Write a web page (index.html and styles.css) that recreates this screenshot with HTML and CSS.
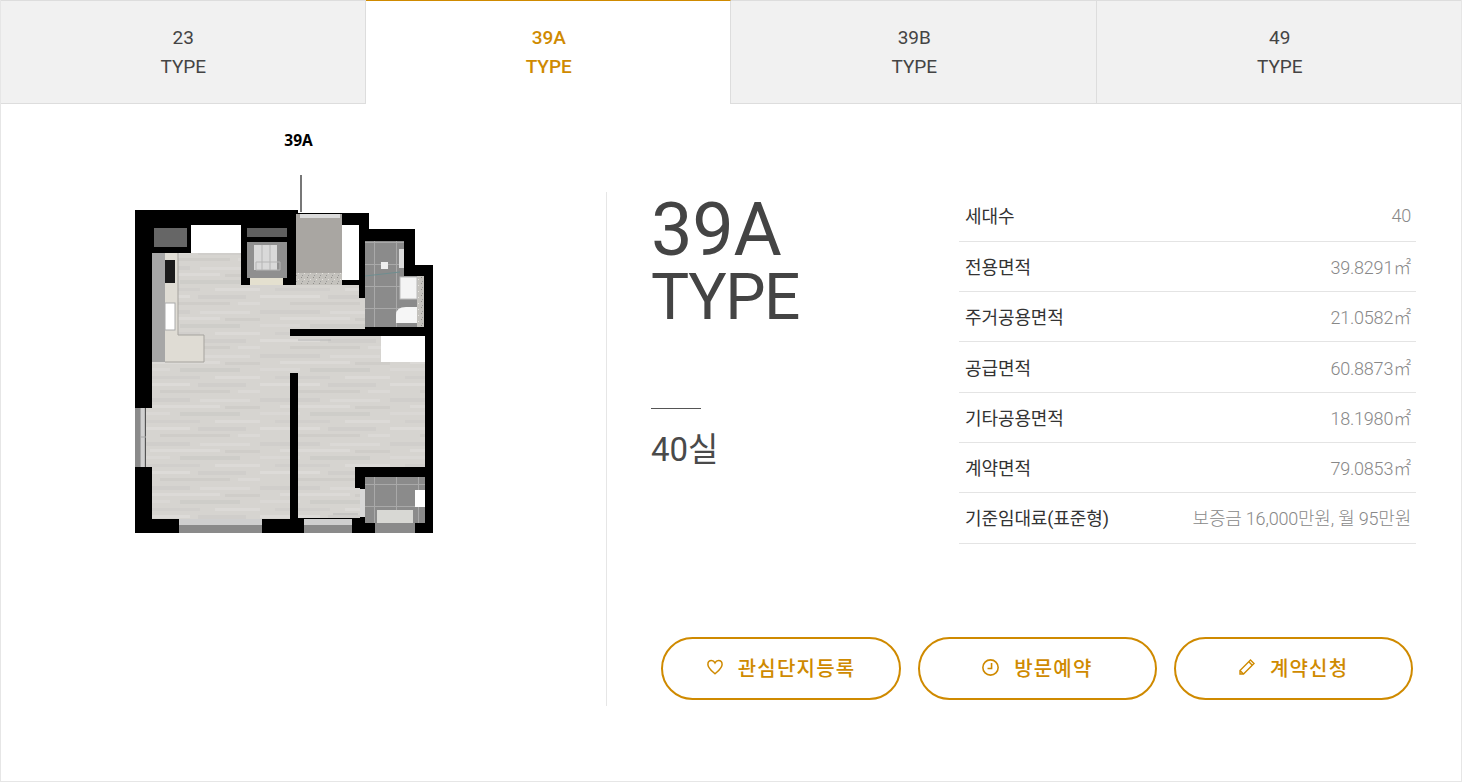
FILE: index.html
```html
<!DOCTYPE html>
<html lang="ko">
<head>
<meta charset="utf-8">
<title>39A TYPE</title>
<link rel="stylesheet" href="styles.css">
</head>
<body>
<div class="page">
  <nav class="tabs">
    <a class="tab">23<br>TYPE</a>
    <a class="tab active"><b>39A</b><br><b>TYPE</b></a>
    <a class="tab">39B<br>TYPE</a>
    <a class="tab">49<br>TYPE</a>
  </nav>
  <main class="body">
    <section class="plan">
      <h3 class="plan-label">39A</h3>
      <svg class="plan-svg" width="330" height="370" viewBox="120 170 330 370">
        <defs>
          <filter id="soft" x="0" y="0" width="100%" height="100%"><feGaussianBlur stdDeviation="0.5"/></filter>
          <pattern id="wood" width="130" height="44" patternUnits="userSpaceOnUse">
            <rect width="130" height="44" fill="#d6d4d0"/>
            <rect x="0" y="2" width="60" height="4" fill="#d0cecb"/>
            <rect x="70" y="3" width="50" height="3" fill="#dbd9d6"/>
            <rect x="20" y="9" width="70" height="3" fill="#dcdad7"/>
            <rect x="95" y="10" width="35" height="3" fill="#cfcdc9"/>
            <rect x="0" y="16" width="40" height="3" fill="#dad8d5"/>
            <rect x="50" y="16" width="60" height="4" fill="#cecdc9"/>
            <rect x="15" y="24" width="55" height="3" fill="#d1cfcc"/>
            <rect x="85" y="24" width="45" height="3" fill="#dcdad7"/>
            <rect x="0" y="31" width="60" height="3" fill="#dddbd8"/>
            <rect x="68" y="31" width="48" height="4" fill="#d0cecb"/>
            <rect x="30" y="38" width="70" height="3" fill="#cfcdc9"/>
            <rect x="108" y="38" width="22" height="3" fill="#dbd9d6"/>
          </pattern>
          <pattern id="tile" width="22" height="22" patternUnits="userSpaceOnUse">
            <rect width="22" height="22" fill="#8b8b8b"/>
            <path d="M0 .5H22M.5 0V22" stroke="#a9a9a9" fill="none"/>
          </pattern>
          <pattern id="speck" width="6" height="6" patternUnits="userSpaceOnUse">
            <rect width="6" height="6" fill="#c4c2bd"/>
            <rect x="1" y="1" width="1" height="1" fill="#8f8d89"/>
            <rect x="4" y="3" width="1" height="1" fill="#e6e4e0"/>
            <rect x="2" y="5" width="1" height="1" fill="#999"/>
          </pattern>
        </defs>

        <rect x="300" y="175" width="2" height="37" fill="#777"/>
        <path d="M135 210H298V213H369V229H415V265H433V533H135Z" fill="#000"/>

        <g filter="url(#soft)">
          <path d="M178 253H241V285H359V298H365V329H290V519H152V362H178Z" fill="url(#wood)"/>
          <path d="M298 336H425V467H355V488H360V518H298Z" fill="url(#wood)"/>
          <rect x="289" y="336" width="10" height="37" fill="url(#wood)"/>
          <rect x="146" y="408" width="7" height="59" fill="url(#wood)"/>
        </g>
        <rect x="135" y="408" width="5" height="59" fill="#8a8a8a"/>
        <rect x="140" y="408" width="5" height="59" fill="#d0d0d0"/>
        <path d="M140.500 408V467M145 408V467M140 437H146" stroke="#a8a8a8" fill="none"/>

        <rect x="152" y="253" width="13" height="109" fill="#a6a6a6"/>
        <rect x="165" y="253" width="13" height="109" fill="#dfdcd4"/>
        <rect x="165" y="335" width="39" height="27" fill="#dfdcd4"/>
        <path d="M178 253V335H204V362H165" fill="none" stroke="#a5a39e"/>
        <rect x="165" y="260" width="10" height="23" fill="#1b1b1b"/>
        <rect x="165" y="303" width="10" height="27" fill="#fff" stroke="#aaa"/>

        <rect x="191" y="225" width="50" height="28" fill="#fff"/>
        <rect x="154" y="228" width="33" height="19" fill="#666"/>
        <rect x="247" y="228" width="40" height="9" fill="#5f5f5f"/>
        <rect x="247" y="242" width="40" height="36" fill="#8f8f8f"/>
        <rect x="254" y="245" width="23" height="25" fill="#d9d9d9"/>
        <path d="M256 262H280V270H256ZM262 245V270M270 245V270" fill="none" stroke="#b5b5b5"/>
        <rect x="250" y="278" width="33" height="7" fill="#e4e0cf"/>

        <rect x="296" y="214" width="46" height="59" fill="#a9a6a2"/>
        <rect x="300" y="214" width="40" height="4" fill="#dcdcdc"/>
        <rect x="296" y="273" width="46" height="12" fill="url(#speck)"/>
        <rect x="342" y="225" width="17" height="55" fill="#fff"/>

        <path d="M365 241H404V276H424V327H365Z" fill="url(#tile)"/>
        <rect x="417" y="276" width="7" height="51" fill="url(#speck)"/>
        <rect x="400" y="277" width="17" height="22" fill="#f4f4f4" stroke="#bbb"/>
        <path d="M396 323V315Q396 307 406 307H417V323Z" fill="#f6f6f6"/>
        <rect x="381" y="262" width="7" height="7" fill="#eee"/>
        <rect x="399" y="249" width="5" height="19" fill="#ddd"/>
        <path d="M365 276L400 272" stroke="#6e8e90"/>

        <rect x="381" y="336" width="44" height="26" fill="#fff"/>

        <rect x="365" y="477" width="60" height="46" fill="url(#tile)"/>
        <rect x="415" y="490" width="10" height="17" fill="#fff"/>
        <rect x="377" y="510" width="36" height="13" fill="#d8d8d4"/>
        <rect x="360" y="489" width="5" height="28" fill="#d8d8d8"/>

        <path d="M179 519H262V525H179ZM304 519H352V525H304Z" fill="#cfcfcf"/>
        <path d="M179 525H262V533H179ZM304 525H352V533H304ZM375 523H415V533H375Z" fill="#8a8a8a"/>
        <path d="M298 340H331M333 514H358" stroke="#b8b8b8"/>
      </svg>
    </section>
    <section class="info">
      <div class="info-top">
        <div class="headline">
          <h2 class="title"><span class="title-num">39A</span><span class="title-type">TYPE</span></h2>
          <div class="rule"></div>
          <p class="count">40실</p>
        </div>
        <table class="specs">
          <tr><th>세대수</th><td>40</td></tr>
          <tr><th>전용면적</th><td>39.8291㎡</td></tr>
          <tr><th>주거공용면적</th><td>21.0582㎡</td></tr>
          <tr><th>공급면적</th><td>60.8873㎡</td></tr>
          <tr><th>기타공용면적</th><td>18.1980㎡</td></tr>
          <tr><th>계약면적</th><td>79.0853㎡</td></tr>
          <tr><th>기준임대료(표준형)</th><td>보증금 16,000만원, 월 95만원</td></tr>
        </table>
      </div>
      <div class="actions">
        <a class="btn">
          <svg class="icon" width="16" height="16" viewBox="0 0 16 16"><path d="M8 14.800C5 12 .9 9 .9 5.400 .9 3 2.500 1.500 4.500 1.500 6 1.500 7.300 2.400 8 3.800 8.700 2.400 10 1.500 11.500 1.500 13.500 1.500 15.100 3 15.100 5.400 15.100 9 11 12 8 14.800Z" fill="none" stroke="currentColor" stroke-width="1.500"/></svg>
          관심단지등록
        </a>
        <a class="btn">
          <svg class="icon" width="17" height="17" viewBox="0 0 16 16"><circle cx="8" cy="8" r="7.200" fill="none" stroke="currentColor" stroke-width="1.500"/><path d="M9 3.800V9H5.200" fill="none" stroke="currentColor" stroke-width="1.500"/></svg>
          방문예약
        </a>
        <a class="btn">
          <svg class="icon" width="16" height="16" viewBox="0 0 16 16"><path d="M1 15V11.500L11.500 1 15 4.500 4.500 15ZM1 11.500L4.500 15M9.800 2.700L13.300 6.200" fill="none" stroke="currentColor" stroke-width="1.400"/></svg>
          계약신청
        </a>
      </div>
    </section>
  </main>
</div>
</body>
</html>
```
FILE: styles.css
```css
* { box-sizing: border-box; }
html, body { margin: 0; padding: 0; background: #fff; }
body { font-family: Roboto, "Noto Sans CJK KR", sans-serif; color: #333; }
.page { width: 1462px; height: 782px; border: 1px solid #e6e6e6; border-top: 0; overflow: hidden; }

.tabs { display: flex; margin: 0 -1px; height: 104px; }
.tab {
  flex: 1 1 25%;
  background: #f1f1f1;
  border-top: 1px solid #ddd;
  border-bottom: 1px solid #ddd;
  border-right: 1px solid #ddd;
  text-align: center;
  font-size: 19px;
  font-weight: 400;
  line-height: 29px;
  padding: 22px 0 0 2px;
  color: #444;
}
.tab.active {
  background: #fff;
  color: #cf8a00;
  border-top: 1px solid #cf8a00;
  border-bottom: 0;
}
.tab.active b { font-weight: 500; }

.body { display: flex; align-items: flex-start; }
.plan { width: 605px; flex: none; display: flex; flex-direction: column; padding-left: 119px; }
.plan-label {
  margin: 25px 0 0;
  width: 357px;
  text-align: center;
  font: 700 15.500px/22px "Noto Sans", sans-serif;
  color: #000;
}
.plan-svg { display: block; margin-top: 19px; }

.info {
  flex: 1;
  height: 514px;
  margin-top: 88px;
  border-left: 1px solid #e6e6e6;
  padding: 0 0 6px 44px;
  display: flex;
  flex-direction: column;
  justify-content: space-between;
}
.info-top { display: flex; align-items: flex-start; }
.headline { width: 308px; flex: none; }
.title { margin: 0; font-weight: 400; color: #444; }
.title-num { display: block; font-size: 74px; line-height: 75px; letter-spacing: -0.300px; }
.title-type { display: block; font-size: 64px; line-height: 62px; font-weight: 400; letter-spacing: -1.500px; }
.rule { width: 50px; height: 1px; background: #555; margin-top: 79px; }
.count { margin: 21px 0 0; font-size: 33px; line-height: 40px; font-weight: 400; color: #4a4a4a; }

.specs { width: 457px; border-collapse: collapse; margin-top: -1px; }
.specs tr { height: 50.300px; border-bottom: 1px solid #e4e4e4; }
.specs th { padding: 0 6px 1px; text-align: left; font-size: 18px; font-weight: 400; color: #333; letter-spacing: -0.100px; white-space: nowrap; }
.specs td { padding: 0 5px 1px; text-align: right; font-size: 18px; font-weight: 300; color: #888; letter-spacing: -0.200px; white-space: nowrap; }

.actions { display: flex; gap: 17px; margin-left: 10.400px; }
.btn {
  width: 239.300px;
  height: 63px;
  padding-bottom: 3px;
  border: 2px solid #cf8a00;
  border-radius: 32px;
  color: #cf8a00;
  font-size: 20px;
  font-weight: 500;
  letter-spacing: 1.200px;
  display: flex;
  align-items: center;
  justify-content: center;
  gap: 15px;
}
.icon { flex: none; }
```
